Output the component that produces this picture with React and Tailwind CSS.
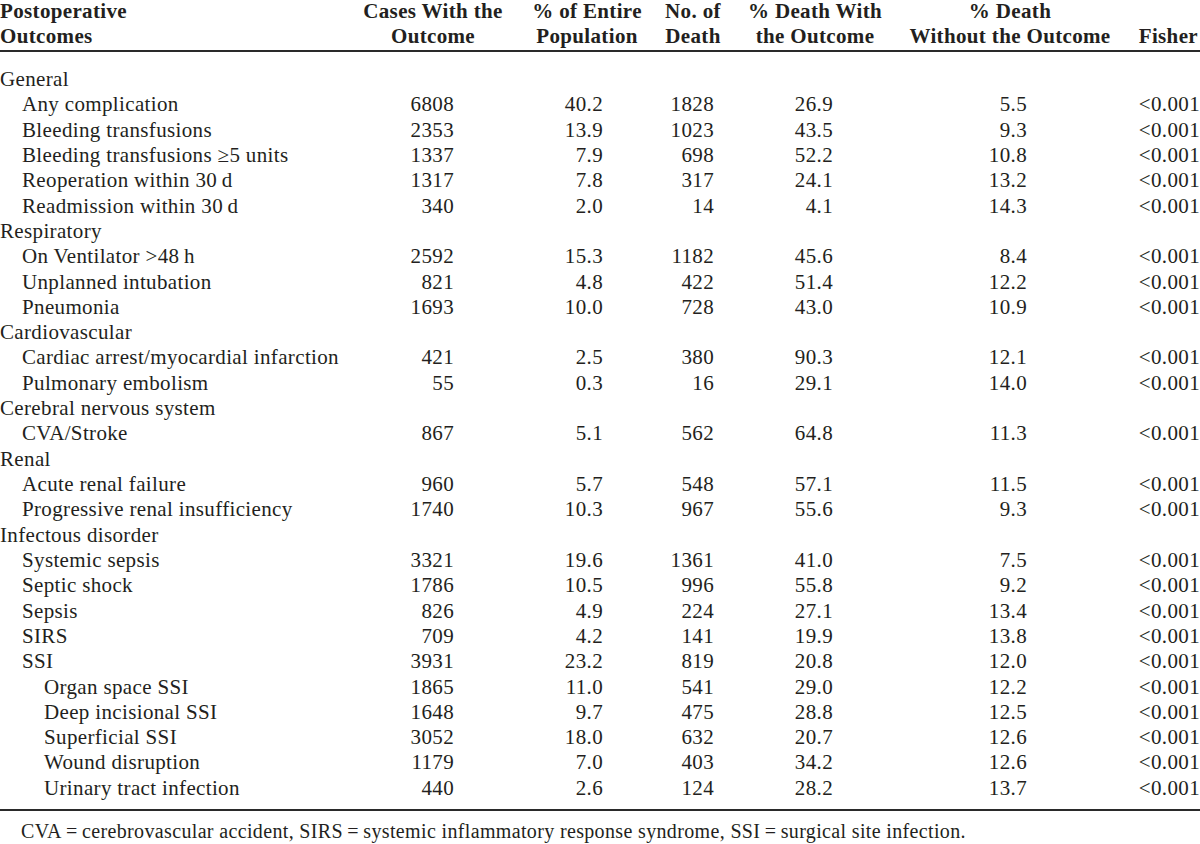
import React from "react";

const cols = "grid grid-cols-[356px_154px_154px_58px_186px_204px_88px]";

const rows = [
  { label: "General", level: 0 },
  { label: "Any complication", level: 1, v: ["6808", "40.2", "1828", "26.9", "5.5", "<0.001"] },
  { label: "Bleeding transfusions", level: 1, v: ["2353", "13.9", "1023", "43.5", "9.3", "<0.001"] },
  { label: "Bleeding transfusions \u22655 units", level: 1, v: ["1337", "7.9", "698", "52.2", "10.8", "<0.001"] },
  { label: "Reoperation within 30\u2009d", level: 1, v: ["1317", "7.8", "317", "24.1", "13.2", "<0.001"] },
  { label: "Readmission within 30\u2009d", level: 1, v: ["340", "2.0", "14", "4.1", "14.3", "<0.001"] },
  { label: "Respiratory", level: 0 },
  { label: "On Ventilator >48\u2009h", level: 1, v: ["2592", "15.3", "1182", "45.6", "8.4", "<0.001"] },
  { label: "Unplanned intubation", level: 1, v: ["821", "4.8", "422", "51.4", "12.2", "<0.001"] },
  { label: "Pneumonia", level: 1, v: ["1693", "10.0", "728", "43.0", "10.9", "<0.001"] },
  { label: "Cardiovascular", level: 0 },
  { label: "Cardiac arrest/myocardial infarction", level: 1, v: ["421", "2.5", "380", "90.3", "12.1", "<0.001"] },
  { label: "Pulmonary embolism", level: 1, v: ["55", "0.3", "16", "29.1", "14.0", "<0.001"] },
  { label: "Cerebral nervous system", level: 0 },
  { label: "CVA/Stroke", level: 1, v: ["867", "5.1", "562", "64.8", "11.3", "<0.001"] },
  { label: "Renal", level: 0 },
  { label: "Acute renal failure", level: 1, v: ["960", "5.7", "548", "57.1", "11.5", "<0.001"] },
  { label: "Progressive renal insufficiency", level: 1, v: ["1740", "10.3", "967", "55.6", "9.3", "<0.001"] },
  { label: "Infectous disorder", level: 0 },
  { label: "Systemic sepsis", level: 1, v: ["3321", "19.6", "1361", "41.0", "7.5", "<0.001"] },
  { label: "Septic shock", level: 1, v: ["1786", "10.5", "996", "55.8", "9.2", "<0.001"] },
  { label: "Sepsis", level: 1, v: ["826", "4.9", "224", "27.1", "13.4", "<0.001"] },
  { label: "SIRS", level: 1, v: ["709", "4.2", "141", "19.9", "13.8", "<0.001"] },
  { label: "SSI", level: 1, v: ["3931", "23.2", "819", "20.8", "12.0", "<0.001"] },
  { label: "Organ space SSI", level: 2, v: ["1865", "11.0", "541", "29.0", "12.2", "<0.001"] },
  { label: "Deep incisional SSI", level: 2, v: ["1648", "9.7", "475", "28.8", "12.5", "<0.001"] },
  { label: "Superficial SSI", level: 2, v: ["3052", "18.0", "632", "20.7", "12.6", "<0.001"] },
  { label: "Wound disruption", level: 2, v: ["1179", "7.0", "403", "34.2", "12.6", "<0.001"] },
  { label: "Urinary tract infection", level: 2, v: ["440", "2.6", "124", "28.2", "13.7", "<0.001"] },
];

// right padding for each numeric column so figures line up under the headers
const pads = ["pr-[56px]", "pr-[61px]", "pr-[8px]", "pr-[75px]", "pr-[85px]", "pr-0"];
const indents = ["pl-0", "pl-[22px]", "pl-[44px]"];

const App = () => {
  return (
    <div className="w-[1200px] h-[844px] overflow-hidden bg-white text-[#231f20] font-['Liberation_Serif',serif] text-[21px] tracking-[0.35px]">
      {/* header */}
      <div className={`${cols} -mt-[1px] pb-[1px] font-bold leading-[25px]`}>
        <div>
          Postoperative
          <br />
          Outcomes
        </div>
        <div className="text-center">
          Cases With the
          <br />
          Outcome
        </div>
        <div className="text-center">
          % of Entire
          <br />
          Population
        </div>
        <div className="text-center">
          No. of
          <br />
          Death
        </div>
        <div className="text-center">
          % Death With
          <br />
          the Outcome
        </div>
        <div className="text-center">
          % Death
          <br />
          Without the Outcome
        </div>
        <div className="flex items-end justify-end pr-[2px]">Fisher</div>
      </div>
      <div className="h-[2px] bg-[#2a2a2a]" />

      {/* body */}
      <div className="pt-[15px] pb-[8px] leading-[25.32px]">
        {rows.map((r) => (
          <div key={r.label} className={cols}>
            <div className={`${indents[r.level]} whitespace-nowrap`}>{r.label}</div>
            {r.v
              ? r.v.map((x, i) => (
                  <div key={i} className={`text-right ${pads[i]}`}>
                    {x}
                  </div>
                ))
              : null}
          </div>
        ))}
      </div>
      <div className="h-[2px] bg-[#2a2a2a]" />

      {/* footnote */}
      <div className="pt-[8px] pl-[21px] text-[20px] leading-[25px] whitespace-nowrap">
        CVA{"\u2009=\u2009"}cerebrovascular accident, SIRS{"\u2009=\u2009"}systemic inflammatory response syndrome, SSI{"\u2009=\u2009"}surgical site infection.
      </div>
    </div>
  );
};

export default App;
